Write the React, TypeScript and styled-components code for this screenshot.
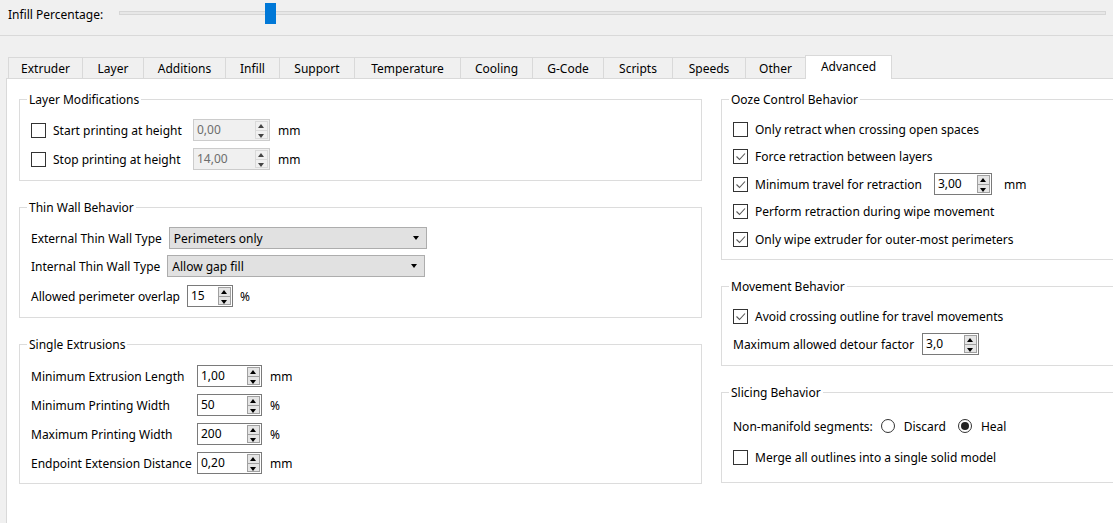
import React from "react";
import styled, { createGlobalStyle } from "styled-components";

const GlobalStyle = createGlobalStyle`
  *, *::before, *::after { box-sizing: border-box; }
  html, body {
    margin: 0;
    background: #f0f0f0;
    overflow: hidden;
  }
  body {
    font-family: "Noto Sans", "Open Sans", sans-serif;
    font-size: 12px;
    color: #000;
  }
`;

const TABS = [
  { label: "Extruder", width: 75 },
  { label: "Layer", width: 62 },
  { label: "Additions", width: 83 },
  { label: "Infill", width: 55 },
  { label: "Support", width: 76 },
  { label: "Temperature", width: 107 },
  { label: "Cooling", width: 73 },
  { label: "G-Code", width: 72 },
  { label: "Scripts", width: 70 },
  { label: "Speeds", width: 74 },
  { label: "Other", width: 61 },
  { label: "Advanced", width: 87 },
];

const INFILL = 15;

/* ---------- small widgets ---------- */

const CheckBox = ({ checked }: { checked?: boolean }) => (
  <Box>
    {checked && (
      <svg width="13" height="13" viewBox="0 0 13 13">
        <polyline
          points="2.5,6.5 5.5,9.5 11,3.5"
          fill="none"
          stroke="#555"
          strokeWidth="1.1"
        />
      </svg>
    )}
  </Box>
);

const Radio = ({ checked }: { checked?: boolean }) => (
  <RadioRing>{checked && <RadioDot />}</RadioRing>
);

interface ISpinProps {
  value: string;
  width: number;
  disabled?: boolean;
}

const SpinBox = ({ value, width, disabled }: ISpinProps) => (
  <Spin $width={width} $disabled={disabled}>
    <SpinValue>{value}</SpinValue>
    <SpinArrows>
      <SpinButton $up $disabled={disabled} />
      <SpinButton $disabled={disabled} />
    </SpinArrows>
  </Spin>
);

const ComboBox = ({ value, width }: { value: string; width: number }) => (
  <Combo $width={width}>
    <span>{value}</span>
    <ComboArrow />
  </Combo>
);

const Group = ({
  title,
  children,
  gap = 7,
  top = 12,
  bottom = 10,
}: {
  title: string;
  children: React.ReactNode;
  gap?: number;
  top?: number;
  bottom?: number;
}) => (
  <GroupBox $top={top} $bottom={bottom}>
    <GroupTitle>{title}</GroupTitle>
    <GroupBody $gap={gap}>{children}</GroupBody>
  </GroupBox>
);

/* ---------- page ---------- */

const App = () => {
  return (
    <>
      <GlobalStyle />
      <Window>
        <SliderBar>
          <SliderLabel>Infill Percentage:</SliderLabel>
          <Track>
            <Groove />
            <Handle style={{ left: `calc((100% - 11px) * ${INFILL / 100})` }} />
          </Track>
        </SliderBar>

        <TabArea>
          <TabBar>
            {TABS.map((t, i) => (
              <Tab key={t.label} $width={t.width} $active={i === TABS.length - 1}>
                {t.label}
              </Tab>
            ))}
          </TabBar>

          <Panel>
            <Column $width={683}>
              <Group title="Layer Modifications">
                <FieldGrid $label={154} $gap={7}>
                  <CheckRow>
                    <CheckBox />
                    Start printing at height
                  </CheckRow>
                  <SpinBox value="0,00" width={77} disabled />
                  <Unit>mm</Unit>
                  <CheckRow>
                    <CheckBox />
                    Stop printing at height
                  </CheckRow>
                  <SpinBox value="14,00" width={77} disabled />
                  <Unit>mm</Unit>
                </FieldGrid>
              </Group>

              <Group title="Thin Wall Behavior" gap={6}>
                <Row>
                  External Thin Wall Type
                  <ComboBox value="Perimeters only" width={258} />
                </Row>
                <Row>
                  Internal Thin Wall Type
                  <ComboBox value="Allow gap fill" width={258} />
                </Row>
                <Row $push={2}>
                  Allowed perimeter overlap
                  <SpinBox value="15" width={46} />
                  <Unit>%</Unit>
                </Row>
              </Group>

              <Group title="Single Extrusions" top={13} bottom={9}>
                <FieldGrid $label={158} $gap={7}>
                  <span>Minimum Extrusion Length</span>
                  <SpinBox value="1,00" width={65} />
                  <Unit>mm</Unit>
                  <span>Minimum Printing Width</span>
                  <SpinBox value="50" width={65} />
                  <Unit>%</Unit>
                  <span>Maximum Printing Width</span>
                  <SpinBox value="200" width={65} />
                  <Unit>%</Unit>
                  <span>Endpoint Extension Distance</span>
                  <SpinBox value="0,20" width={65} />
                  <Unit>mm</Unit>
                </FieldGrid>
              </Group>
            </Column>

            <Column $width={420}>
              <Group title="Ooze Control Behavior" gap={5.5} top={11} bottom={9}>
                <CheckRow>
                  <CheckBox />
                  Only retract when crossing open spaces
                </CheckRow>
                <CheckRow>
                  <CheckBox checked />
                  Force retraction between layers
                </CheckRow>
                <Row $gap={12}>
                  <CheckRow>
                    <CheckBox checked />
                    Minimum travel for retraction
                  </CheckRow>
                  <SpinBox value="3,00" width={58} />
                  <Unit>mm</Unit>
                </Row>
                <CheckRow>
                  <CheckBox checked />
                  Perform retraction during wipe movement
                </CheckRow>
                <CheckRow>
                  <CheckBox checked />
                  Only wipe extruder for outer-most perimeters
                </CheckRow>
              </Group>

              <Group title="Movement Behavior" gap={6} top={11}>
                <CheckRow>
                  <CheckBox checked />
                  Avoid crossing outline for travel movements
                </CheckRow>
                <Row $gap={8}>
                  Maximum allowed detour factor
                  <SpinBox value="3,0" width={57} />
                </Row>
              </Group>

              <Group title="Slicing Behavior" gap={9} top={15} bottom={14}>
                <Row $gap={8}>
                  Non-manifold segments:
                  <RadioOption>
                    <Radio />
                    Discard
                  </RadioOption>
                  <RadioOption>
                    <Radio checked />
                    Heal
                  </RadioOption>
                </Row>
                <CheckRow>
                  <CheckBox />
                  Merge all outlines into a single solid model
                </CheckRow>
              </Group>
            </Column>
          </Panel>
        </TabArea>
      </Window>
    </>
  );
};

/* ---------- styles ---------- */

const Window = styled.div`
  width: 1113px;
  height: 523px;
  background: #f0f0f0;
  overflow: hidden;
`;

const SliderBar = styled.div`
  height: 36px;
  display: flex;
  align-items: flex-start;
  padding: 3px 7px 0 8px;
  border-bottom: 1px solid #d9d9d9;
`;

const SliderLabel = styled.span`
  width: 111px;
  margin-top: 2px;
  line-height: 20px;
  flex-shrink: 0;
`;

const Track = styled.div`
  position: relative;
  flex: 1;
  height: 20px;
  display: flex;
  align-items: center;
`;

const Groove = styled.div`
  width: 100%;
  height: 4px;
  background: #e7e7e7;
  border: 1px solid #d6d6d6;
`;

const Handle = styled.div`
  position: absolute;
  top: 0;
  width: 11px;
  height: 21px;
  background: #0078d7;
`;

const TabArea = styled.div`
  padding: 19px 0 0 6px;
`;

const TabBar = styled.div`
  position: relative;
  z-index: 1;
  height: 24px;
  margin-bottom: -1px;
  padding-left: 2px;
  display: flex;
  align-items: flex-start;
`;

const Tab = styled.div<{ $width: number; $active?: boolean }>`
  width: ${({ $width }) => $width}px;
  height: ${({ $active }) => ($active ? 24 : 21)}px;
  margin-top: ${({ $active }) => ($active ? 0 : 2)}px;
  margin-left: -1px;
  display: flex;
  align-items: center;
  justify-content: center;
  padding-bottom: ${({ $active }) => ($active ? 2 : 0)}px;
  background: ${({ $active }) => ($active ? "#fff" : "#f0f0f0")};
  border: 1px solid #d9d9d9;
  border-bottom: none;

  &:first-child {
    margin-left: 0;
  }
`;

const Panel = styled.div`
  position: relative;
  width: 1140px;
  height: 470px;
  background: #fff;
  border: 1px solid #d9d9d9;
  padding: 12px 0 0 12px;
  display: flex;
  align-items: flex-start;
  gap: 19px;
`;

const Column = styled.div<{ $width: number }>`
  width: ${({ $width }) => $width}px;
  display: flex;
  flex-direction: column;
  gap: 18px;
`;

const GroupBox = styled.fieldset<{ $top: number; $bottom: number }>`
  margin: 0;
  min-width: 0;
  padding: ${({ $top, $bottom }) => `${$top}px 11px ${$bottom}px 11px`};
  border: 1px solid #dcdcdc;
`;

const GroupTitle = styled.legend`
  padding: 1px 2px 0;
  margin-left: -4px;
  line-height: 15px;
`;

const GroupBody = styled.div<{ $gap: number }>`
  display: flex;
  flex-direction: column;
  gap: ${({ $gap }) => $gap}px;
`;

const Row = styled.div<{ $gap?: number; $push?: number }>`
  height: 22px;
  display: flex;
  align-items: center;
  gap: ${({ $gap }) => $gap ?? 7}px;
  margin-top: ${({ $push }) => $push ?? 0}px;
  white-space: nowrap;
`;

const FieldGrid = styled.div<{ $label: number; $gap: number }>`
  display: grid;
  grid-template-columns: ${({ $label }) => $label}px auto 1fr;
  grid-auto-rows: 22px;
  align-items: center;
  column-gap: 8px;
  row-gap: ${({ $gap }) => $gap}px;
  white-space: nowrap;
`;

const CheckRow = styled.label`
  height: 22px;
  display: flex;
  align-items: center;
  gap: 7px;
  white-space: nowrap;
`;

const Box = styled.span`
  width: 15px;
  height: 15px;
  flex-shrink: 0;
  border: 1px solid #333;
  background: #fff;
  display: flex;
  align-items: center;
  justify-content: center;
`;

const RadioOption = styled.span`
  display: flex;
  align-items: center;
  gap: 9px;
  margin-right: 4px;
`;

const RadioRing = styled.span`
  width: 14px;
  height: 14px;
  border: 1px solid #333;
  border-radius: 50%;
  background: #fff;
  display: flex;
  align-items: center;
  justify-content: center;
`;

const RadioDot = styled.span`
  width: 8px;
  height: 8px;
  border-radius: 50%;
  background: #222;
`;

const Unit = styled.span`
  white-space: nowrap;
`;

const Spin = styled.div<{ $width: number; $disabled?: boolean }>`
  width: ${({ $width }) => $width}px;
  height: 22px;
  display: flex;
  align-items: stretch;
  padding: 1px 1px 1px 3px;
  border: 1px solid ${({ $disabled }) => ($disabled ? "#cccccc" : "#7a7a7a")};
  background: ${({ $disabled }) => ($disabled ? "#f0f0f0" : "#fff")};
  color: ${({ $disabled }) => ($disabled ? "#6d6d6d" : "#000")};
`;

const SpinValue = styled.span`
  flex: 1;
  line-height: 18px;
`;

const SpinArrows = styled.span`
  width: 13px;
  display: flex;
  flex-direction: column;
`;

const SpinButton = styled.span<{ $up?: boolean; $disabled?: boolean }>`
  flex: 1;
  position: relative;
  background: ${({ $disabled }) => ($disabled ? "#f0f0f0" : "#e5e5e5")};
  border: 1px solid ${({ $disabled }) => ($disabled ? "#dadada" : "#a0a0a0")};
  margin-top: ${({ $up }) => ($up ? 0 : -1)}px;

  &::after {
    content: "";
    position: absolute;
    left: 2px;
    top: ${({ $up }) => ($up ? 2 : 3)}px;
    border-left: 3.5px solid transparent;
    border-right: 3.5px solid transparent;
    ${({ $up, $disabled }) =>
      $up
        ? `border-bottom: 4px solid ${$disabled ? "#444" : "#000"};`
        : `border-top: 4px solid ${$disabled ? "#444" : "#000"};`}
  }
`;

const Combo = styled.div<{ $width: number }>`
  width: ${({ $width }) => $width}px;
  height: 22px;
  display: flex;
  align-items: center;
  justify-content: space-between;
  padding: 0 7px 0 4px;
  background: #e1e1e1;
  border: 1px solid #adadad;
  white-space: nowrap;
`;

const ComboArrow = styled.span`
  width: 0;
  height: 0;
  border-left: 3.5px solid transparent;
  border-right: 3.5px solid transparent;
  border-top: 4px solid #000;
`;

export default App;
